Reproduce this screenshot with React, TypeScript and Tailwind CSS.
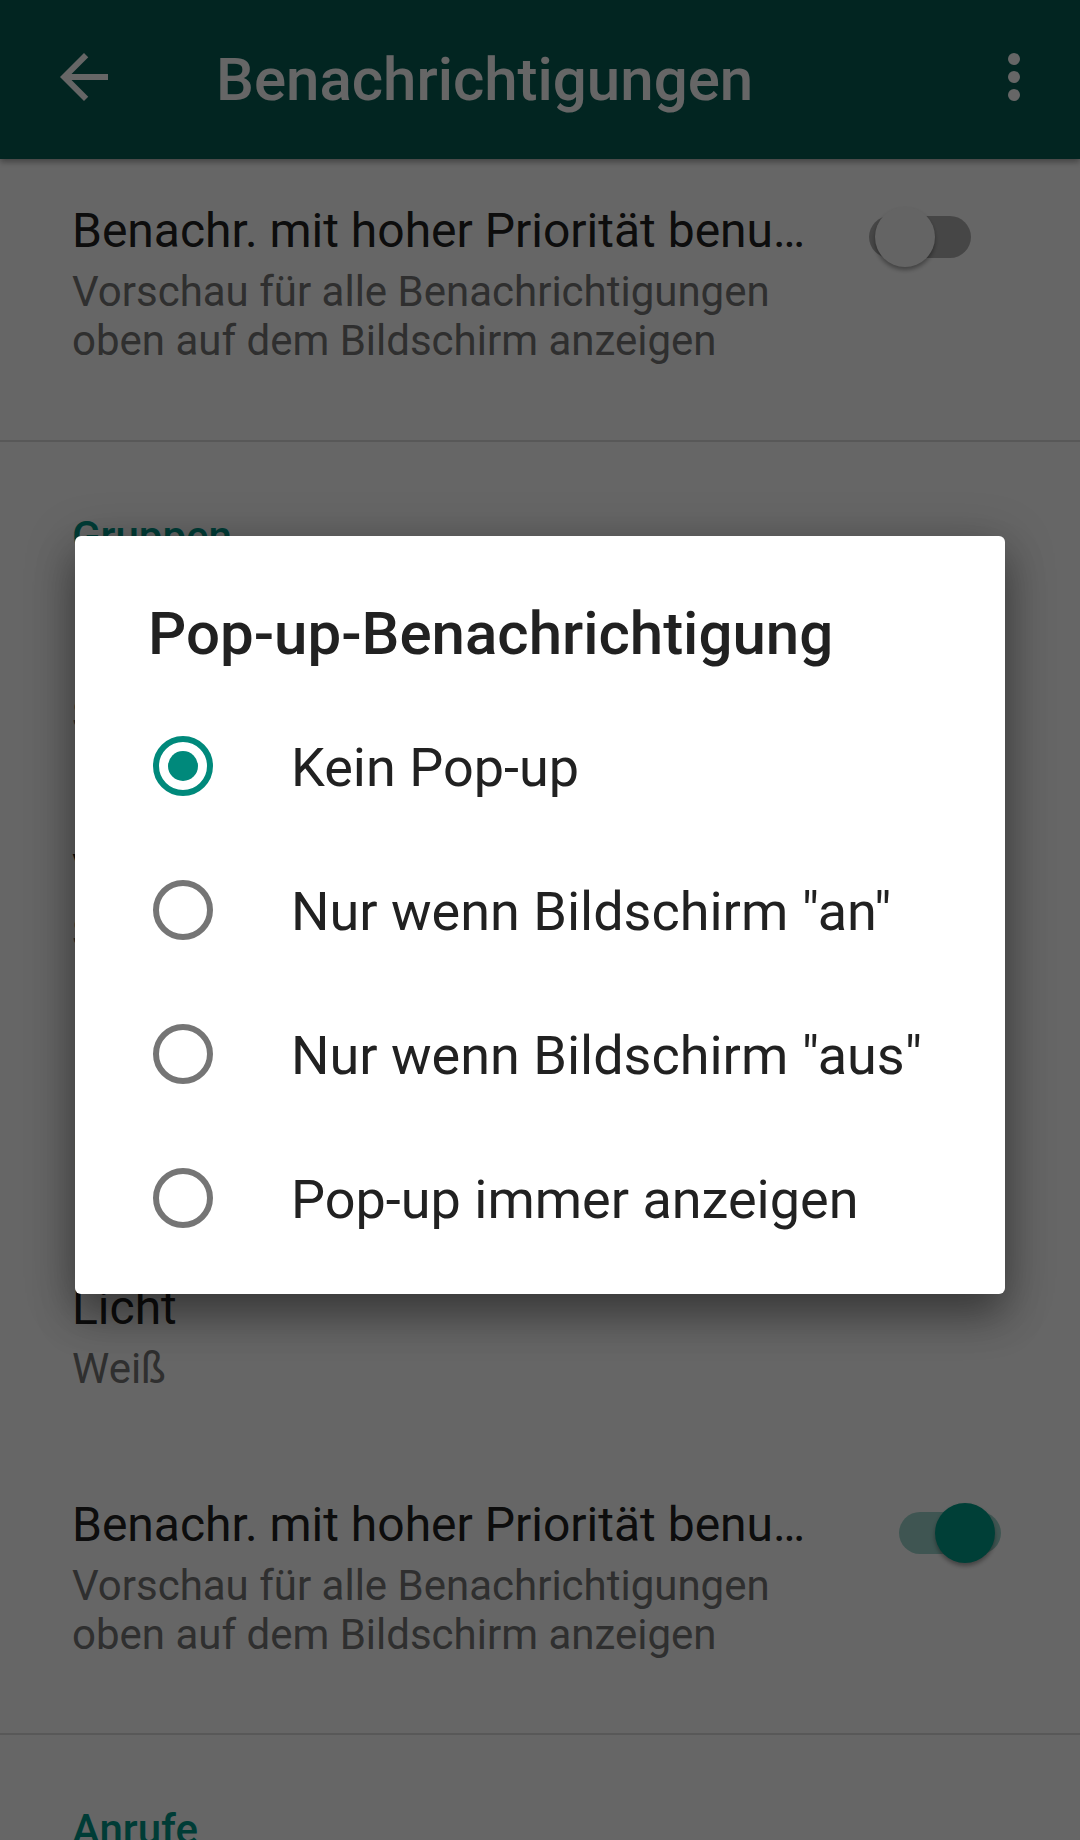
import React from "react";

const POPUP_OPTIONS = [
  "Kein Pop-up",
  'Nur wenn Bildschirm "an"',
  'Nur wenn Bildschirm "aus"',
  "Pop-up immer anzeigen",
];

function Toggle({ on }: { on: boolean }) {
  return (
    <div className="relative h-[60px] w-[102px] shrink-0">
      <div
        className={
          on
            ? "absolute left-0 top-[9px] h-[42px] w-[102px] rounded-full bg-[#9dd5cd]"
            : "absolute left-0 top-[9px] h-[42px] w-[102px] rounded-full bg-[#b0b0b0]"
        }
      />
      <div
        className={
          on
            ? "absolute right-[6px] top-0 h-[60px] w-[60px] rounded-full bg-[#009e8a] shadow-[0_3px_4px_rgba(0,0,0,0.35)]"
            : "absolute left-[6px] top-0 h-[60px] w-[60px] rounded-full bg-[#fafafa] shadow-[0_3px_4px_rgba(0,0,0,0.35)]"
        }
      />
    </div>
  );
}

function PriorityRow({ on }: { on: boolean }) {
  return (
    <div className={on ? "flex pl-[72px] pt-[53px] pb-[74px]" : "flex pl-[72px] pt-[44px] pb-[75px]"}>
      <div className="min-w-0 flex-1">
        <p className="whitespace-nowrap text-[48px] leading-[56px] text-[#212121]">
          Benachr. mit hoher Priorität benu…
        </p>
        <p className="mt-[8px] text-[42px] leading-[49px] text-[#757575]">
          Vorschau für alle Benachrichtigungen
          <br />
          oben auf dem Bildschirm anzeigen
        </p>
      </div>
      <div className={on ? "mt-[6px] mr-[79px]" : "mt-[4px] mr-[109px]"}>
        <Toggle on={on} />
      </div>
    </div>
  );
}

function SettingRow({ title, summary }: { title: string; summary: string }) {
  return (
    <div className="h-[218px] pl-[72px] pt-[54px]">
      <p className="text-[48px] leading-[56px] text-[#212121]">{title}</p>
      <p className="mt-[8px] text-[42px] leading-[49px] text-[#757575]">{summary}</p>
    </div>
  );
}

function SectionHeader({ label, bottom }: { label: string; bottom: string }) {
  return (
    <p className={`pl-[72px] pt-[70px] text-[42px] font-medium leading-[50px] text-[#009688] ${bottom}`}>
      {label}
    </p>
  );
}

function Radio({ checked }: { checked: boolean }) {
  return checked ? (
    <div className="flex h-[60px] w-[60px] shrink-0 items-center justify-center rounded-full border-[6px] border-[#00897b]">
      <div className="h-[30px] w-[30px] rounded-full bg-[#00897b]" />
    </div>
  ) : (
    <div className="h-[60px] w-[60px] shrink-0 rounded-full border-[6px] border-[#757575]" />
  );
}

export default function App() {
  const selected = 0;

  return (
    <div className="relative h-[1840px] w-[1080px] overflow-hidden bg-white font-['Roboto','Noto_Sans',sans-serif]">
      <header className="relative z-10 flex h-[159px] items-center bg-[#075e54] shadow-[0_3px_6px_rgba(0,0,0,0.35)]">
        <svg viewBox="0 0 24 24" className="ml-[48px] h-[72px] w-[72px] -translate-y-[3px] fill-white">
          <path d="M20 11H7.83l5.59-5.59L12 4l-8 8 8 8 1.41-1.41L7.83 13H20v-2z" />
        </svg>
        <h1 className="ml-[96px] flex-1 text-[60px] font-medium leading-[72px] text-white">
          Benachrichtigungen
        </h1>
        <svg viewBox="0 0 24 24" className="mr-[30px] h-[72px] w-[72px] -translate-y-[3px] fill-white">
          <circle cx="12" cy="6" r="2" />
          <circle cx="12" cy="12" r="2" />
          <circle cx="12" cy="18" r="2" />
        </svg>
      </header>

      <main>
        <PriorityRow on={false} />
        <div className="h-[2px] bg-[#dcdcdc]" />
        <SectionHeader label="Gruppen" bottom="pb-[10px]" />
        <SettingRow title="Benachrichtigungston" summary="Standard (Standard)" />
        <SettingRow title="Vibration" summary="Standard" />
        <SettingRow title="Pop-up-Benachrichtigung" summary="Kein Pop-up" />
        <SettingRow title="Licht" summary="Weiß" />
        <PriorityRow on={true} />
        <div className="h-[2px] bg-[#dcdcdc]" />
        <SectionHeader label="Anrufe" bottom="pb-[6px]" />
      </main>

      <div className="absolute inset-0 z-20 flex justify-center bg-black/60 pt-[536px]">
        <div className="h-[758px] w-[930px] rounded-[6px] bg-white pt-[62px] shadow-[0_24px_40px_rgba(0,0,0,0.3),0_8px_50px_rgba(0,0,0,0.25)]">
          <h2 className="pl-[73px] text-[60px] font-medium leading-[72px] text-[#212121]">
            Pop-up-Benachrichtigung
          </h2>
          <div className="mt-[24px]">
            {POPUP_OPTIONS.map((option, i) => (
              <div key={option} className="flex h-[144px] items-center pl-[78px]">
                <Radio checked={i === selected} />
                <span className="ml-[78px] pt-[4px] text-[54px] leading-[64px] text-[#212121]">
                  {option}
                </span>
              </div>
            ))}
          </div>
        </div>
      </div>
    </div>
  );
}
